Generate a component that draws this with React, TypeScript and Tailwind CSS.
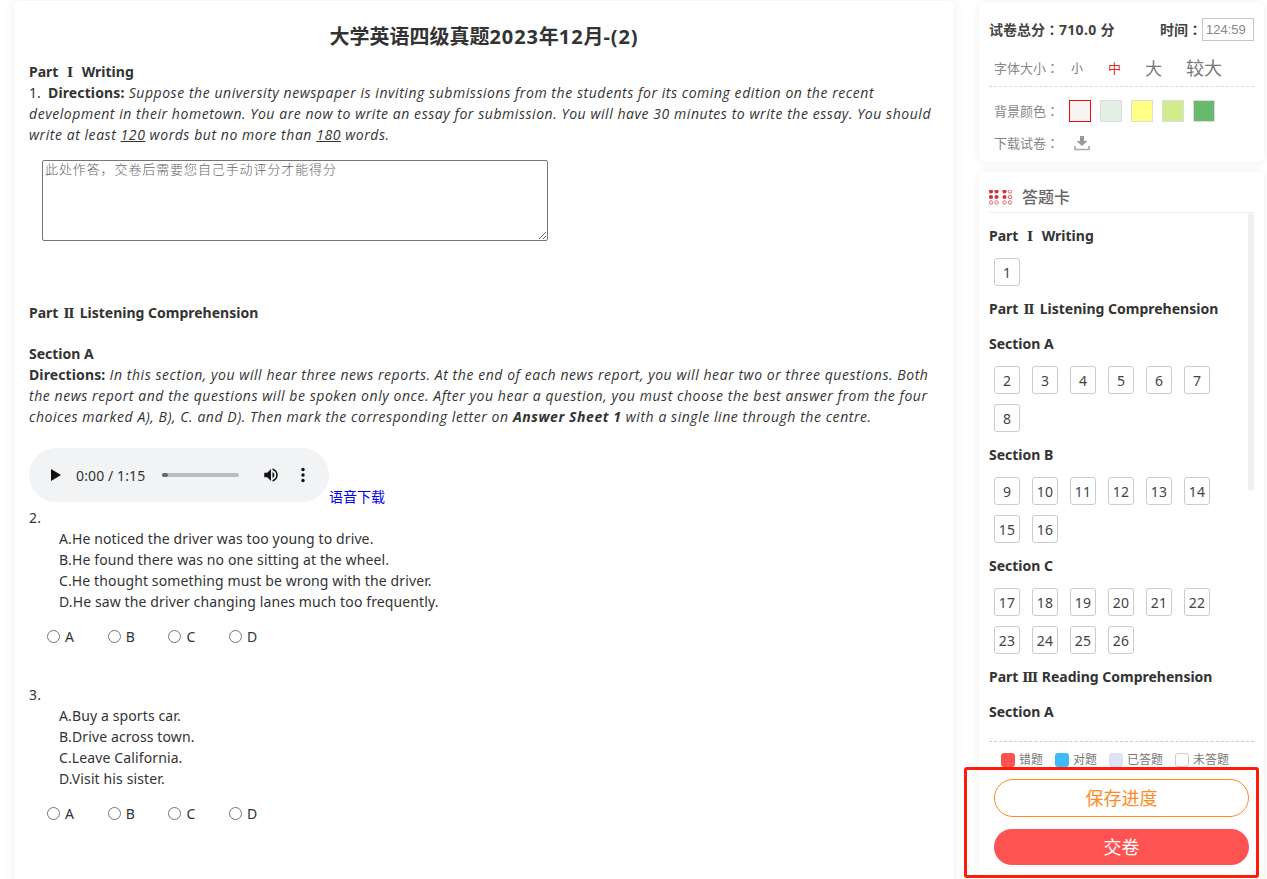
import React from "react";

function Rn({ children, wide }: { children: React.ReactNode; wide?: boolean }) {
  return (
    <span
      className={`inline-block text-center font-['DejaVu_Serif',serif] text-[13px] leading-[13px] font-bold tracking-normal ${
        wide ? "w-[16px]" : "w-[14px]"
      }`}
    >
      {children}
    </span>
  );
}

function Colon() {
  return <span className="font-['Noto_Sans_CJK_TC',sans-serif]">：</span>;
}

function Radios() {
  return (
    <div className="mt-[14px] ml-[18px] flex h-[21px] items-center">
      {["A", "B", "C", "D"].map((l) => (
        <label key={l} className="flex w-[60.7px] items-center">
          <input type="radio" name="x" className="m-0 h-[13px] w-[13px]" />
          <span className="ml-[5px]">{l}</span>
        </label>
      ))}
    </div>
  );
}

function Question({ n, opts, className }: { n: string; opts: string[]; className: string }) {
  return (
    <div className={className}>
      <div>{n}</div>
      <div className="pl-[30px]">
        {opts.map((o) => (
          <div key={o}>{o}</div>
        ))}
      </div>
      <Radios />
    </div>
  );
}

function Boxes({ items }: { items: number[] }) {
  return (
    <div className="flex w-[240px] flex-wrap gap-x-[12px] pl-[5px]">
      {items.map((i) => (
        <div
          key={i}
          className="mb-[10px] flex h-[28px] w-[26px] items-center justify-center rounded-[3px] border border-[#cccccc] text-[14px] text-[#444444]"
        >
          {i}
        </div>
      ))}
    </div>
  );
}

function range(a: number, b: number) {
  const r: number[] = [];
  for (let i = a; i <= b; i++) r.push(i);
  return r;
}

function Heading({ children, className }: { children: React.ReactNode; className: string }) {
  return (
    <div className={`h-[21px] text-[14px] leading-[21px] font-bold tracking-normal text-[#333333] ${className}`}>
      {children}
    </div>
  );
}

function GridIcon() {
  const xs = [991, 996.5, 1004.5, 1010];
  const ys = [191, 196.5, 202];
  return (
    <svg width="24" height="15" viewBox="989 189.5 24 15" className="shrink-0">
      {ys.map((y, yi) =>
        xs.map((x, xi) => {
          const filled = (xi < 2 && yi < 2) || (xi === 2 && yi < 2);
          return filled ? (
            <circle key={`${x}-${y}`} cx={x} cy={y} r="2.1" fill="#d9333a" />
          ) : (
            <circle key={`${x}-${y}`} cx={x} cy={y} r="1.7" fill="none" stroke="#e2646a" strokeWidth="1" />
          );
        })
      )}
    </svg>
  );
}

export default function App() {
  return (
    <div className="relative flex h-[879px] w-[1267px] gap-[25px] overflow-hidden bg-[#ffffff] pt-[1px] pl-[14px] font-['Noto_Sans','Noto_Sans_CJK_SC',sans-serif] text-[14px] leading-[21px] tracking-[0.12px] text-[#333333]">
      <main className="h-[900px] w-[940px] shrink-0 rounded-[6px] bg-white px-[15px] pt-[23px] shadow-[0_0_12px_rgba(0,0,0,0.07)]">
        <h1 className="mb-[11px] text-center text-[20px] leading-[26px] font-bold tracking-normal text-[#333333]">
          大学英语四级真题<span className="tracking-[0.9px]">2023</span>年<span className="tracking-[0.9px]">12</span>月<span className="tracking-[0.9px]">-(2)</span>
        </h1>
        <div className="h-[21px] font-bold tracking-normal">
          Part <Rn wide>Ⅰ</Rn> Writing
        </div>
        <div className="h-[63px] font-['Open_Sans','Noto_Sans_CJK_SC',sans-serif] tracking-[0.56px] italic">
          <span className="font-['Noto_Sans'] tracking-normal not-italic">1.&nbsp; </span>
          <b className="font-['Noto_Sans'] tracking-[0.12px] not-italic">Directions:</b> Suppose the university newspaper
          is inviting submissions from the students for its coming edition on the recent development in their hometown. You
          are now to write an essay for submission. You will have 30 minutes to write the essay. You should write at least{" "}
          <u>120</u> words but no more than <u>180</u> words.
        </div>
        <textarea
          readOnly
          placeholder="此处作答，交卷后需要您自己手动评分才能得分"
          className="mt-[15px] ml-[13px] block h-[81px] w-[506px] rounded-[2px] border border-[#767676] px-[2px] py-0 font-['Noto_Sans_CJK_SC',sans-serif] text-[13px] leading-[16px] font-light tracking-[0.9px] placeholder:text-[#666666]"
        />
        <div className="mt-[61px] h-[21px] font-bold tracking-normal">
          Part <Rn>Ⅱ</Rn> Listening Comprehension
        </div>
        <div className="mt-[20px] h-[21px] font-bold tracking-normal">Section A</div>
        <div className="h-[63px] font-['Open_Sans',sans-serif] tracking-[0.56px] italic">
          <b className="font-['Noto_Sans'] tracking-[0.12px] not-italic">Directions:</b> In this section, you will hear
          three news reports. At the end of each news report, you will hear two or three questions. Both the news report and
          the questions will be spoken only once. After you hear a question, you must choose the best answer from the four
          choices marked A), B), C. and D). Then mark the corresponding letter on <b>Answer Sheet 1</b> with a single line
          through the centre.
        </div>
        <div className="mt-[21px] flex h-[54px] items-end">
          <div className="flex h-[54px] w-[300px] items-center rounded-[27px] bg-[#f1f3f4] pl-[21px] text-[#333333]">
            <svg width="12" height="14" viewBox="0 0 12 14" className="shrink-0">
              <path d="M1 1v12l10-6z" fill="#111111" />
            </svg>
            <span className="ml-[14px] w-[70px] text-[14px] whitespace-nowrap">0:00 / 1:15</span>
            <div className="ml-[16px] h-[4px] w-[77px] rounded-full bg-[#bcbdbe]">
              <div className="h-[4px] w-[6px] rounded-full bg-[#666666]" />
            </div>
            <svg width="18" height="18" viewBox="0 0 24 24" className="ml-[23px] shrink-0">
              <path
                d="M3 9v6h4l5 5V4L7 9H3zm13.5 3A4.5 4.5 0 0 0 14 7.97v8.05c1.48-.73 2.5-2.25 2.5-4.02zM14 3.23v2.06c2.89.86 5 3.54 5 6.71s-2.11 5.85-5 6.71v2.06c4.01-.91 7-4.49 7-8.77s-2.99-7.86-7-8.77z"
                fill="#111111"
              />
            </svg>
            <svg width="4" height="16" viewBox="0 0 4 16" className="ml-[21px] shrink-0">
              <circle cx="2" cy="2.5" r="1.7" fill="#111111" />
              <circle cx="2" cy="8" r="1.7" fill="#111111" />
              <circle cx="2" cy="13.5" r="1.7" fill="#111111" />
            </svg>
          </div>
          <a className="mb-[-2px] text-[14px] leading-[14px] tracking-normal text-[#0000ee]">语音下载</a>
        </div>
        <Question
          n="2."
          className="mt-[5px]"
          opts={[
            "A.He noticed the driver was too young to drive.",
            "B.He found there was no one sitting at the wheel.",
            "C.He thought something must be wrong with the driver.",
            "D.He saw the driver changing lanes much too frequently.",
          ]}
        />
        <Question
          n="3."
          className="mt-[37px]"
          opts={["A.Buy a sports car.", "B.Drive across town.", "C.Leave California.", "D.Visit his sister."]}
        />
      </main>

      <aside className="flex w-[285px] shrink-0 flex-col gap-[10px] pt-[1px]">
        <section className="h-[160px] shrink-0 rounded-[6px] bg-white px-[10px] pt-[16px] shadow-[0_0_10px_rgba(0,0,0,0.07)]">
          <div className="flex h-[23px] items-center justify-between text-[14px] font-bold tracking-normal text-[#444444]">
            <span>
              试卷总分
              <Colon />
              <span className="tracking-[0.3px]">710.0 分</span>
            </span>
            <span className="flex items-center">
              时间
              <Colon />
              <span className="flex h-[23px] w-[52px] items-center border border-[#c4c4c4] pl-[3px] font-['Liberation_Sans',sans-serif] text-[13px] font-normal text-[#888888]">
                124:59
              </span>
            </span>
          </div>
          <div className="mt-[14px] flex h-[32px] items-center border-b border-dashed border-[#dddddd] pb-[5px] pl-[5px] text-[13px] tracking-normal text-[#888888]">
            <span className="w-[77px]">
              字体大小
              <Colon />
            </span>
            <span className="w-[37px] text-[12px] text-[#777777]">小</span>
            <span className="w-[37px] text-[#e02b2b]">中</span>
            <span className="w-[41px] text-[17px] text-[#777777]">大</span>
            <span className="text-[18px] text-[#777777]">较大</span>
          </div>
          <div className="mt-[13px] flex items-center pl-[5px] text-[13px] tracking-normal text-[#888888]">
            <span className="w-[75px]">
              背景颜色
              <Colon />
            </span>
            <div className="flex gap-[9px]">
              <span className="h-[22px] w-[22px] border border-[#ff0000] bg-[#f5f5f5]" />
              <span className="h-[22px] w-[22px] border border-[#dddddd] bg-[#e3efe5]" />
              <span className="h-[22px] w-[22px] border border-[#dddddd] bg-[#ffff85]" />
              <span className="h-[22px] w-[22px] border border-[#dddddd] bg-[#d1ed8b]" />
              <span className="h-[22px] w-[22px] border border-[#dddddd] bg-[#69b96f]" />
            </div>
          </div>
          <div className="mt-[10px] flex items-center pl-[5px] text-[13px] tracking-normal text-[#888888]">
            <span className="w-[80px]">
              下载试卷
              <Colon />
            </span>
            <svg width="16" height="15" viewBox="0 0 16 15">
              <path d="M6 0h4v5h3.5L8 10 2.5 5H6z" fill="#999999" />
              <path d="M1 10v3.5h14V10" fill="none" stroke="#aaaaaa" strokeWidth="1.6" />
            </svg>
          </div>
        </section>

        <section className="h-[720px] shrink-0 rounded-[6px] bg-white px-[10px] shadow-[0_0_10px_rgba(0,0,0,0.07)]">
          <div className="flex h-[41px] items-center gap-[9px] border-b border-[#eeeeee] pt-[16px] pb-[6px] text-[16px] font-medium tracking-normal text-[#666666]">
            <GridIcon />
            <span>答题卡</span>
          </div>
          <div className="relative h-[529px] overflow-hidden border-b border-dashed border-[#cccccc] pt-[12px]">
            <Heading className="mb-[12px]">
              Part <Rn wide>Ⅰ</Rn> Writing
            </Heading>
            <Boxes items={[1]} />
            <Heading className="mt-[2px] mb-[14px]">
              Part <Rn>Ⅱ</Rn> Listening Comprehension
            </Heading>
            <Heading className="mb-[12px]">Section A</Heading>
            <Boxes items={range(2, 8)} />
            <Heading className="mt-[2px] mb-[12px]">Section B</Heading>
            <Boxes items={range(9, 16)} />
            <Heading className="mt-[2px] mb-[12px]">Section C</Heading>
            <Boxes items={range(17, 26)} />
            <Heading className="mt-[2px] mb-[14px]">
              Part <Rn wide>Ⅲ</Rn> Reading Comprehension
            </Heading>
            <Heading className="mb-[12px]">Section A</Heading>
            <div className="absolute top-0 right-0 h-full w-[6px] bg-white">
              <div className="h-[278px] w-[6px] rounded-full bg-[#f0f0f0]" />
            </div>
          </div>
          <div className="mt-[11px] flex items-center gap-[12px] pl-[12px] text-[12px] leading-[14px] tracking-normal text-[#777777]">
            <span className="flex items-center gap-[4px]">
              <i className="h-[14px] w-[14px] rounded-[3px] bg-[#ff5252]" />错题
            </span>
            <span className="flex items-center gap-[4px]">
              <i className="h-[14px] w-[14px] rounded-[3px] bg-[#3bbcf7]" />对题
            </span>
            <span className="flex items-center gap-[4px]">
              <i className="h-[14px] w-[14px] rounded-[3px] bg-[#dde3f5]" />已答题
            </span>
            <span className="flex items-center gap-[4px]">
              <i className="h-[14px] w-[14px] rounded-[3px] border border-[#cccccc]" />未答题
            </span>
          </div>
          <div className="mt-[12px] ml-[5px] flex h-[38px] w-[255px] items-center justify-center rounded-full border border-[#ff8a1f] text-[18px] tracking-normal text-[#ff8a1f]">
            保存进度
          </div>
          <div className="mt-[12px] ml-[5px] flex h-[36px] w-[255px] items-center justify-center rounded-full bg-[#ff5252] text-[18px] tracking-normal text-white">
            交卷
          </div>
        </section>
      </aside>
      <div className="pointer-events-none absolute top-[767px] left-[964px] h-[111px] w-[295px] rounded-[3px] border-[3px] border-[#ff1a0a]" />
    </div>
  );
}
